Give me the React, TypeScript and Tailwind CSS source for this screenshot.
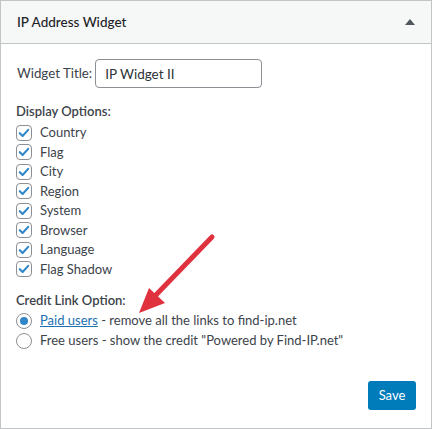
import React, { useState } from "react";

const options = [
  "Country",
  "Flag",
  "City",
  "Region",
  "System",
  "Browser",
  "Language",
  "Flag Shadow",
];

const Check: React.FC = () => (
  <span className="flex h-4 w-4 items-center justify-center rounded-[4px] border border-[#8c8f94] bg-white">
    <svg viewBox="0 0 16 16" className="h-[14px] w-[14px]">
      <path
        d="M3.2 8.2 L6.4 11.4 L12.8 4.4"
        fill="none"
        stroke="#2f86c9"
        strokeWidth="2.4"
        strokeLinecap="round"
        strokeLinejoin="round"
      />
    </svg>
  </span>
);

const Radio: React.FC<{ on: boolean }> = ({ on }) => (
  <span className="flex h-4 w-4 items-center justify-center rounded-full border border-[#8c8f94] bg-white">
    {on && <span className="h-2 w-2 rounded-full bg-[#2f86c9]" />}
  </span>
);

const App: React.FC = () => {
  const [title, setTitle] = useState("IP Widget II");
  const [paid, setPaid] = useState(true);

  return (
    <div
      className="relative h-[429px] w-[432px] bg-white text-[13px] text-[#3c434a]"
      style={{ fontFamily: '"Segoe UI", Lato, sans-serif' }}
    >
      <div className="h-full border border-[#c3c4c7]">
        {/* header */}
        <div className="flex h-[43px] items-center justify-between border-b border-[#c3c4c7] bg-[#f6f7f7] pl-[16px] pr-[16px]">
          <span className="text-[13.5px] font-medium text-[#1d2327]">IP Address Widget</span>
          <svg viewBox="0 0 10 6" className="h-[6px] w-[10px]">
            <path d="M0 6 L5 0 L10 6 Z" fill="#50575e" />
          </svg>
        </div>

        <div className="px-[15px]">
          <div className="mt-[15px] flex items-center">
            <label htmlFor="wt" className="mr-[3px] ml-[1px] text-[13.3px]">
              Widget Title:
            </label>
            <input
              id="wt"
              value={title}
              onChange={(e) => setTitle(e.target.value)}
              className="h-[29px] w-[167px] rounded-[4px] border border-[#8c8f94] px-[9px] text-[13.5px] text-[#2c3338] outline-none"
            />
          </div>

          <div className="mt-[14px] flex h-[20px] items-center font-semibold">
            Display Options:
          </div>
          <div className="mt-[1px]">
            {options.map((o) => (
              <div key={o} className="flex h-[19.5px] items-center gap-[8px]">
                <Check />
                <span>{o}</span>
              </div>
            ))}
          </div>

          <div className="mt-[12px] flex h-[20px] items-center font-semibold">
            Credit Link Option:
          </div>
          <div className="flex h-[20px] cursor-pointer items-center gap-[8px]" onClick={() => setPaid(true)}>
            <Radio on={paid} />
            <span>
              <a href="#" className="text-[#2271b1] underline">
                Paid users
              </a>{" "}
              - remove all the links to find-ip.net
            </span>
          </div>
          <div className="flex h-[20px] cursor-pointer items-center gap-[8px]" onClick={() => setPaid(false)}>
            <Radio on={!paid} />
            <span>Free users - show the credit "Powered by Find-IP.net"</span>
          </div>

          <div className="mt-[30px] flex justify-end">
            <button className="h-[29px] w-[48px] rounded-[3px] bg-[#007cba] text-[13px] text-white">
              Save
            </button>
          </div>
        </div>
      </div>

      {/* annotation arrow */}
      <svg className="pointer-events-none absolute left-0 top-0" width="432" height="429">
        <line x1="212" y1="237" x2="152" y2="299" stroke="#e0313f" strokeWidth="5" strokeLinecap="round" />
        <path d="M139 313 L149 288 L165 303 Z" fill="#e0313f" />
      </svg>
    </div>
  );
};

export default App;
